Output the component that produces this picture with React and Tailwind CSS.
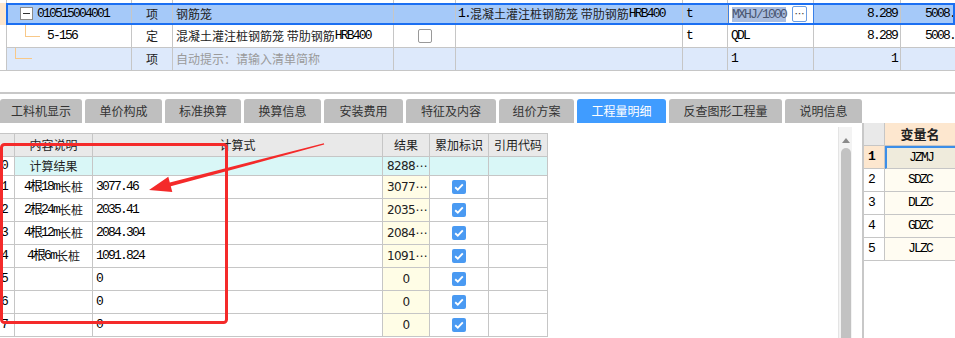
import React from "react";

const mono = "font-['Liberation_Mono','Noto_Sans_CJK_SC',monospace] text-[13px] tracking-[-1.8px] text-black";
const topCols = "grid grid-cols-[7px_125px_41px_221px_62px_227px_45px_86px_87px_72px]";
const botCols = "grid grid-cols-[15px_78px_290px_47px_59px_59px]";

const tabs = [
  { name: "工料机显示", w: "w-[82px]" },
  { name: "单价构成", w: "w-[77px]" },
  { name: "标准换算", w: "w-[76px]" },
  { name: "换算信息", w: "w-[77px]" },
  { name: "安装费用", w: "w-[79px]" },
  { name: "特征及内容", w: "w-[90px]" },
  { name: "组价方案", w: "w-[75px]" },
  { name: "工程量明细", w: "w-[89px]", active: true },
  { name: "反查图形工程量", w: "w-[113px]" },
  { name: "说明信息", w: "w-[77px]" },
];

const rows = [
  { n: "0", desc: "计算结果", expr: "", res: "8288⋯", check: false, cyan: true },
  { n: "1", desc: "4根18m长桩", expr: "3077.46", res: "3077⋯", check: true },
  { n: "2", desc: "2根24m长桩", expr: "2035.41", res: "2035⋯", check: true },
  { n: "3", desc: "4根12m长桩", expr: "2084.304", res: "2084⋯", check: true },
  { n: "4", desc: "4根6m长桩", expr: "1091.824", res: "1091⋯", check: true },
  { n: "5", desc: "", expr: "0", res: "0", check: true },
  { n: "6", desc: "", expr: "0", res: "0", check: true },
  { n: "7", desc: "", expr: "0", res: "0", check: true },
];

const vars = ["JZMJ", "SDZC", "DLZC", "GDZC", "JLZC"];

function Check() {
  return (
    <span className="inline-flex h-[14px] w-[14px] items-center justify-center rounded-[2px] bg-[#4a9af2]">
      <svg width="10" height="8" viewBox="0 0 10 8">
        <path d="M1.2 4.2 L3.8 6.6 L8.8 1.4" stroke="#fff" strokeWidth="1.9" fill="none" />
      </svg>
    </span>
  );
}

function Latin({ children }) {
  return <span className={mono}>{children}</span>;
}

export default function App() {
  const cell = "border-r border-b border-[#c6c6c6] flex items-center overflow-hidden whitespace-nowrap";
  return (
    <div className="relative h-[338px] w-[955px] overflow-hidden bg-white font-['Noto_Sans_CJK_SC',sans-serif] text-[12px] text-[#222]">
      {/* top grid */}
      <div className={`${topCols} h-[3px]`}>
        {Array.from({ length: 10 }).map((_, i) => (
          <div key={i} className="border-r border-[#c6c6c6]" />
        ))}
      </div>

      <div className={`${topCols} relative h-[22px]`}>
        <div className="border-r border-[#c6c6c6] bg-[#fde6cc]" />
        <div className={`${cell} bg-[#a5c9f9] pl-[13px]`}>
          <span className="flex h-[13px] w-[13px] items-center justify-center border border-[#8a8a8a] bg-white">
            <span className="h-[1px] w-[7px] bg-[#333]" />
          </span>
          <span className={`${mono} ml-[4px]`}>010515004001</span>
        </div>
        <div className={`${cell} justify-center bg-[#a5c9f9]`}>项</div>
        <div className={`${cell} bg-[#a5c9f9] pl-[3px]`}>钢筋笼</div>
        <div className={`${cell} bg-[#a5c9f9]`} />
        <div className={`${cell} bg-[#a5c9f9] pl-[2px]`}>
          <Latin>1.</Latin>混凝土灌注桩钢筋笼 带肋钢筋<Latin>HRB400</Latin>
        </div>
        <div className={`${cell} bg-[#a5c9f9] pl-[3px]`}>
          <Latin>t</Latin>
        </div>
        <div className="flex items-center border-x border-[#3a80e8] bg-white pl-[3px]">
          <span className="bg-[#a9bde0] font-['Liberation_Mono',monospace] text-[13px] leading-[15px] tracking-[-1.8px] text-[#4a5670]">
            MXHJ/1000
          </span>
          <span className="ml-[6px] flex h-[16px] w-[15px] items-center justify-center rounded-[2px] border border-[#6d9de0] bg-white text-[10px] leading-none text-[#333]">
            ⋯
          </span>
        </div>
        <div className={`${cell} justify-end bg-[#a5c9f9] pr-[3px]`}>
          <Latin>8.289</Latin>
        </div>
        <div className={`${cell} bg-[#a5c9f9] pl-[24px]`}>
          <Latin>5008.</Latin>
        </div>
        <div className="pointer-events-none absolute left-[6px] right-0 top-0 h-full border-2 border-[#1b6ff2]" />
      </div>

      <div className={`${topCols} h-[23px]`}>
        <div className="border-r border-[#c6c6c6]" />
        <div className={`${cell} relative pl-[40px]`}>
          <span className="absolute left-[18px] top-0 h-[12px] w-[1px] bg-[#f8c888]" />
          <span className="absolute left-[18px] top-[11px] h-[1px] w-[15px] bg-[#f8c888]" />
          <Latin>5-156</Latin>
        </div>
        <div className={`${cell} justify-center`}>定</div>
        <div className={`${cell} pl-[3px]`}>
          混凝土灌注桩钢筋笼 带肋钢筋<Latin>HRB400</Latin>
        </div>
        <div className={`${cell} justify-center`}>
          <span className="h-[14px] w-[14px] rounded-[2px] border border-[#999] bg-white" />
        </div>
        <div className={cell} />
        <div className={`${cell} pl-[3px]`}>
          <Latin>t</Latin>
        </div>
        <div className={`${cell} pl-[3px]`}>
          <Latin>QDL</Latin>
        </div>
        <div className={`${cell} justify-end pr-[3px]`}>
          <Latin>8.289</Latin>
        </div>
        <div className={`${cell} pl-[24px]`}>
          <Latin>5008.</Latin>
        </div>
      </div>

      <div className={`${topCols} h-[23px]`}>
        <div className="border-b border-r border-[#c6c6c6]" />
        <div className={`${cell} relative bg-[#dde9fb]`}>
          <span className="absolute left-[8px] top-0 h-[11px] w-[1px] bg-[#f8c888]" />
          <span className="absolute left-[8px] top-[10px] h-[1px] w-[17px] bg-[#f8c888]" />
        </div>
        <div className={`${cell} justify-center bg-[#dde9fb]`}>项</div>
        <div className={`${cell} bg-[#dde9fb] pl-[3px] text-[#9a9a9a]`}>自动提示：请输入清单简称</div>
        <div className={`${cell} bg-[#dde9fb]`} />
        <div className={`${cell} bg-[#dde9fb]`} />
        <div className={`${cell} bg-[#dde9fb]`} />
        <div className={`${cell} bg-[#dde9fb] pl-[3px]`}>
          <Latin>1</Latin>
        </div>
        <div className={`${cell} justify-end bg-[#dde9fb] pr-[3px]`}>
          <Latin>1</Latin>
        </div>
        <div className={`${cell} bg-[#dde9fb]`} />
      </div>

      <div className="h-[21px]" />
      <div className="h-[2px] bg-[#c8c8c8]" />
      <div className="h-[5px]" />

      {/* tabs */}
      <div className="flex h-[24px] gap-[3px]">
        {tabs.map((t) => (
          <div
            key={t.name}
            className={`${t.w} flex items-center justify-center rounded-t-[3px] text-[12px] ${
              t.active ? "bg-[#409cff] text-white" : "bg-[#bfbfbf] text-[#333]"
            }`}
          >
            {t.name}
          </div>
        ))}
      </div>

      {/* content */}
      <div className="flex h-[215px]">
        <div className="w-[838px] pt-[10px]">
          <div className="w-[548px] border-t border-[#c6c6c6]">
            <div className={`${botCols} h-[23px] bg-[#e9e9e9]`}>
              <div className={cell} />
              <div className={`${cell} justify-center`}>内容说明</div>
              <div className={`${cell} justify-center`}>计算式</div>
              <div className={`${cell} justify-center`}>结果</div>
              <div className={`${cell} justify-center`}>累加标识</div>
              <div className={`${cell} justify-center`}>引用代码</div>
            </div>
            {rows.map((r) => (
              <div key={r.n} className={`${botCols} ${r.cyan ? "h-[19px]" : "h-[23px]"}`}>
                <div className={`${cell} bg-white pl-[1px]`}>
                  <Latin>{r.n}</Latin>
                </div>
                <div className={`${cell} justify-center ${r.cyan ? "bg-[#d9f7f7]" : ""}`}>
                  {r.desc.split(/(\d+m)/).map((p, i) =>
                    /\d/.test(p) ? <Latin key={i}>{p}</Latin> : <span key={i}>{p}</span>
                  )}
                </div>
                <div className={`${cell} pl-[3px] ${r.cyan ? "bg-[#d9f7f7]" : ""}`}>
                  <Latin>{r.expr}</Latin>
                </div>
                <div
                  className={`${cell} ${r.res === "0" ? "justify-center" : "pl-[4px]"} ${
                    r.cyan ? "bg-[#d9f7f7]" : "bg-[#fffde6]"
                  }`}
                >
                  <span className="font-['DejaVu_Sans',sans-serif] text-[12px] tracking-[-0.6px]">{r.res}</span>
                </div>
                <div className={`${cell} justify-center ${r.cyan ? "bg-[#d9f7f7]" : ""}`}>
                  {r.check && <Check />}
                </div>
                <div className={`${cell} ${r.cyan ? "bg-[#d9f7f7]" : ""}`} />
              </div>
            ))}
          </div>
        </div>

        {/* scrollbar */}
        <div className="mt-[4px] flex w-[14px] flex-col items-center border-l border-[#e4e4e4] bg-[#f3f3f3]">
          <svg className="mt-[11px]" width="8" height="5" viewBox="0 0 8 5">
            <path d="M0 5 L4 0 L8 5 Z" fill="#8a8a8a" />
          </svg>
          <div className="ml-[1px] mt-[5px] w-[10px] flex-1 rounded-t-[5px] bg-[#c2c2c2]" />
        </div>
        <div className="w-[10px]" />
        <div className="w-[2px] bg-[#c8c8c8]" />

        {/* variables */}
        <div className="flex-1">
          <div className="grid h-[23px] grid-cols-[21px_1fr]">
            <div className="border-b border-r border-[#c6c6c6] bg-[#e9e9e9]" />
            <div className="flex items-center justify-center border-b border-[#c6c6c6] bg-[#fde7cf] text-[13px] font-bold">
              变量名
            </div>
          </div>
          {vars.map((v, i) => (
            <div key={v} className="grid h-[23px] grid-cols-[21px_1fr]">
              <div
                className={`flex items-center border-b border-r border-[#c6c6c6] pl-[4px] ${
                  i === 0 ? "bg-[#fde7cf] font-bold" : "bg-white"
                }`}
              >
                <Latin>{i + 1}</Latin>
              </div>
              <div
                className={`flex items-center justify-center border-b border-[#c6c6c6] ${
                  i === 0 ? "border-l-2 border-t-2 border-l-[#3c8ee8] border-t-[#3c8ee8] bg-[#efebdc]" : "bg-[#fffcf2]"
                }`}
              >
                <Latin>{v}</Latin>
              </div>
            </div>
          ))}
        </div>
      </div>

      {/* red annotation */}
      <svg className="pointer-events-none absolute left-0 top-0" width="955" height="338" viewBox="0 0 955 338">
        <rect x="1.5" y="144.5" width="225" height="178" rx="3" fill="none" stroke="#f42a2a" strokeWidth="3" />
        <polygon
          points="149,190 168.3,176.7 169.8,182.5 323.9,143.3 324.2,144.6 170.8,186.3 172.3,192.1"
          fill="#f42a2a"
        />
      </svg>
    </div>
  );
}
